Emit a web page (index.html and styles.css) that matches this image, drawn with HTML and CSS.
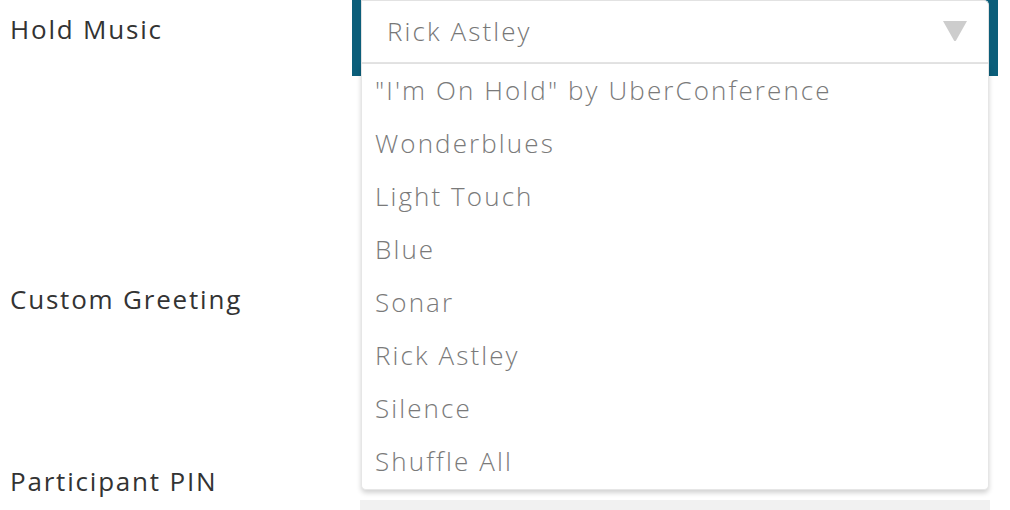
FILE: index.html
```html
<!DOCTYPE html>
<html>
<head>
<meta charset="utf-8">
<link rel="stylesheet" href="styles.css">
</head>
<body>
<div class="form">
  <div class="row row-music">
    <div class="label">Hold Music</div>
    <div class="field">
      <div class="select-wrap">
        <div class="select">
          <span class="value">Rick Astley</span>
          <svg class="caret" width="26" height="22" viewBox="0 0 26 22"><path d="M1 1 H25 L14.2 20.2 Q13 22 11.8 20.2 Z" fill="#cdcdcd"/></svg>
        </div>
      </div>
      <ul class="menu">
        <li>"I'm On Hold" by UberConference</li>
        <li>Wonderblues</li>
        <li>Light Touch</li>
        <li>Blue</li>
        <li>Sonar</li>
        <li>Rick Astley</li>
        <li>Silence</li>
        <li>Shuffle All</li>
      </ul>
    </div>
  </div>
  <div class="row row-greeting">
    <div class="label">Custom Greeting</div>
    <div class="field"></div>
  </div>
  <div class="row row-pin">
    <div class="label">Participant PIN</div>
    <div class="field"><div class="input"></div></div>
  </div>
</div>
</body>
</html>
```
FILE: styles.css
```css
html, body {
  margin: 0;
  padding: 0;
  background: #ffffff;
  font-family: "Open Sans", Lato, sans-serif;
  font-variant-ligatures: none;
}
.form {
  display: flex;
  flex-direction: column;
  width: 1010px;
  height: 510px;
  overflow: hidden;
}
.row {
  display: grid;
  grid-template-columns: 352px 646px;
}
.label {
  color: #333333;
  font-size: 26px;
  font-weight: 400;
  letter-spacing: 1.8px;
  padding-left: 10px;
  line-height: 30px;
}
.row-music { height: 270px; }
.row-music .label { padding-top: 14px; }
.row-greeting { height: 196px; }
.row-greeting .label { padding-top: 14px; }
.row-pin { height: 44px; }
.field { position: relative; }
.select-wrap {
  background: #0b5e7a;
  height: 76px;
  padding: 0 9px;
}
.select {
  box-sizing: border-box;
  height: 64px;
  background: #ffffff;
  border: 1px solid #e2e2e2;
  border-bottom: 2px solid #e4e4e4;
  border-radius: 0 5px 0 0;
  display: flex;
  align-items: center;
  justify-content: space-between;
  padding: 0 20px 0 25px;
}
.value {
  color: #777777;
  font-size: 26px;
  font-weight: 300;
  letter-spacing: 2.1px;
  padding-bottom: 2px;
}
.caret { display: block; margin-top: -2px; }
.menu {
  position: absolute;
  top: 64px;
  left: 9px;
  width: 628px;
  height: 426px;
  box-sizing: border-box;
  margin: 0;
  padding: 10px 0 0 13px;
  list-style: none;
  background: #ffffff;
  border: 1px solid #e6e6e6;
  border-top: none;
  border-radius: 0 0 5px 5px;
  box-shadow: 0 3px 5px rgba(0, 0, 0, 0.18);
}
.menu li {
  height: 53px;
  line-height: 32px;
  color: #7a7a7a;
  font-size: 26px;
  font-weight: 300;
  letter-spacing: 2.1px;
}
.input {
  margin: 34px 0 0 8px;
  width: 630px;
  height: 20px;
  background: #f1f1f1;
}
```
